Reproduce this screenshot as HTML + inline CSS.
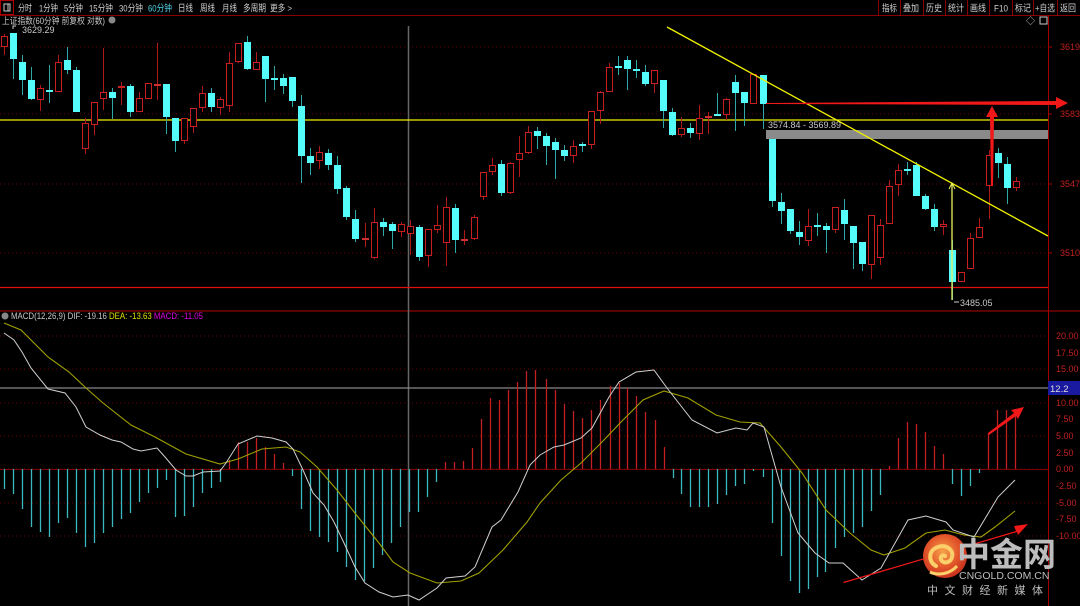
<!DOCTYPE html>
<html><head><meta charset="utf-8">
<style>
html,body{margin:0;padding:0;background:#000;width:1080px;height:606px;overflow:hidden}
svg{display:block}
text{font-family:"Liberation Sans","Noto Sans CJK SC",sans-serif}
</style></head>
<body>
<svg id="s" width="1080" height="606" viewBox="0 0 1080 606" xmlns="http://www.w3.org/2000/svg">
<defs>
<radialGradient id="lg" cx="0.45" cy="0.4" r="0.6">
<stop offset="0" stop-color="#f7a24a"/><stop offset="0.6" stop-color="#e2552a"/><stop offset="1" stop-color="#c8321e"/>
</radialGradient>
</defs>
<rect width="1080" height="606" fill="#000"/>
<line x1="0" y1="15.5" x2="1080" y2="15.5" stroke="#8a0000"/>
<rect x="0.5" y="0.5" width="13" height="14" fill="none" stroke="#a00"/>
<rect x="4" y="4" width="6" height="7" fill="none" stroke="#ccc"/>
<line x1="8" y1="4" x2="8" y2="11" stroke="#ccc"/>
<g font-size="9.5" fill="#d0d0d0" lengthAdjust="spacingAndGlyphs">
<text x="18" y="11.5" textLength="14" lengthAdjust="spacingAndGlyphs">分时</text>
<text x="39" y="11.5" textLength="19" lengthAdjust="spacingAndGlyphs">1分钟</text>
<text x="64" y="11.5" textLength="19" lengthAdjust="spacingAndGlyphs">5分钟</text>
<text x="89" y="11.5" textLength="24" lengthAdjust="spacingAndGlyphs">15分钟</text>
<text x="119" y="11.5" textLength="24" lengthAdjust="spacingAndGlyphs">30分钟</text>
<text x="148" y="11.5" textLength="24" lengthAdjust="spacingAndGlyphs" fill="#4fd8e8">60分钟</text>
<text x="178" y="11.5" textLength="15" lengthAdjust="spacingAndGlyphs">日线</text>
<text x="200" y="11.5" textLength="15" lengthAdjust="spacingAndGlyphs">周线</text>
<text x="222" y="11.5" textLength="15" lengthAdjust="spacingAndGlyphs">月线</text>
<text x="243" y="11.5" textLength="23" lengthAdjust="spacingAndGlyphs">多周期</text>
<text x="270" y="11.5" textLength="22" lengthAdjust="spacingAndGlyphs">更多 &gt;</text>
<text x="882" y="11.5" textLength="15" lengthAdjust="spacingAndGlyphs">指标</text>
<text x="903" y="11.5" textLength="16" lengthAdjust="spacingAndGlyphs">叠加</text>
<text x="926" y="11.5" textLength="16" lengthAdjust="spacingAndGlyphs">历史</text>
<text x="948" y="11.5" textLength="16" lengthAdjust="spacingAndGlyphs">统计</text>
<text x="970" y="11.5" textLength="16" lengthAdjust="spacingAndGlyphs">画线</text>
<text x="994" y="11.5" textLength="14" lengthAdjust="spacingAndGlyphs">F10</text>
<text x="1015" y="11.5" textLength="16" lengthAdjust="spacingAndGlyphs">标记</text>
<text x="1035" y="11.5" textLength="20" lengthAdjust="spacingAndGlyphs">+自选</text>
<text x="1060" y="11.5" textLength="16" lengthAdjust="spacingAndGlyphs">返回</text>
</g>
<g stroke="#8a0000">
<line x1="878.5" y1="0" x2="878.5" y2="15"/><line x1="900.5" y1="0" x2="900.5" y2="15"/><line x1="923.5" y1="0" x2="923.5" y2="15"/><line x1="945.5" y1="0" x2="945.5" y2="15"/><line x1="967.5" y1="0" x2="967.5" y2="15"/><line x1="989.5" y1="0" x2="989.5" y2="15"/><line x1="1012.5" y1="0" x2="1012.5" y2="15"/><line x1="1033.5" y1="0" x2="1033.5" y2="15"/><line x1="1057.5" y1="0" x2="1057.5" y2="15"/>
</g>
<text x="2" y="24" font-size="9" fill="#c8c8c8" textLength="103" lengthAdjust="spacingAndGlyphs">上证指数(60分钟 前复权 对数)</text>
<circle cx="112" cy="20" r="3.5" fill="#888"/>
<text x="22" y="33" font-size="9" fill="#c8c8c8">3629.29</text>
<path d="M13 29 v-3 h3" stroke="#ccc" fill="none"/>
<text x="1026" y="24" font-size="9" fill="#ccc">◇</text>
<rect x="1040" y="17" width="7" height="7" fill="none" stroke="#ccc"/>
<g stroke="#6a0000" stroke-dasharray="1,3">
<line x1="0" y1="47" x2="1048" y2="47"/><line x1="0" y1="114" x2="1048" y2="114"/><line x1="0" y1="184" x2="1048" y2="184"/><line x1="0" y1="253" x2="1048" y2="253"/>
<line x1="0" y1="336" x2="1048" y2="336"/><line x1="0" y1="369" x2="1048" y2="369"/><line x1="0" y1="403" x2="1048" y2="403"/><line x1="0" y1="436" x2="1048" y2="436"/><line x1="0" y1="469" x2="1048" y2="469"/><line x1="0" y1="503" x2="1048" y2="503"/><line x1="0" y1="536" x2="1048" y2="536"/>
</g>
<line x1="0" y1="469.5" x2="1048" y2="469.5" stroke="#7a0000"/>
<line x1="0" y1="311" x2="1080" y2="311" stroke="#5a0000" stroke-width="2"/>
<line x1="1048.5" y1="16" x2="1048.5" y2="606" stroke="#a00000"/>
<g font-size="9" fill="#c02020">
<text x="1060" y="50">3619</text><text x="1060" y="117">3583</text><text x="1060" y="187">3547</text><text x="1060" y="256">3510</text>
<text x="1056" y="339">20.00</text><text x="1056" y="356">17.50</text><text x="1056" y="372">15.00</text><text x="1056" y="406">10.00</text><text x="1056" y="422">7.50</text><text x="1056" y="439">5.00</text><text x="1056" y="456">2.50</text><text x="1056" y="472">0.00</text><text x="1056" y="489">-2.50</text><text x="1056" y="506">-5.00</text><text x="1056" y="522">-7.50</text><text x="1056" y="539">-10.00</text>
</g>
<g stroke="#a00000"><line x1="1048" y1="47" x2="1052" y2="47"/><line x1="1048" y1="114" x2="1052" y2="114"/><line x1="1048" y1="184" x2="1052" y2="184"/><line x1="1048" y1="253" x2="1052" y2="253"/></g>
<line x1="408.5" y1="26" x2="408.5" y2="606" stroke="#666" stroke-width="1.5"/>
<line x1="0" y1="388" x2="1048" y2="388" stroke="#888" stroke-width="1.2"/>
<rect x="1048" y="381" width="32" height="14" fill="#1a1aa0"/>
<text x="1050" y="392" font-size="9.5" fill="#ddd">12.2</text>
<line x1="0" y1="287.5" x2="1048" y2="287.5" stroke="#e01010" stroke-width="1.2"/>
<line x1="0" y1="120" x2="1048" y2="120" stroke="#f0f000" stroke-width="1.3"/>
<rect x="766" y="130" width="282" height="9" fill="#8a8a8a"/>
<text x="768" y="128" font-size="9" fill="#c8c8c8">3574.84 - 3569.89</text>
<g id="candles"></g>
<g id="bars"></g>
<line x1="667" y1="27" x2="1048" y2="236" stroke="#f0f000" stroke-width="1.3"/>
<line x1="952" y1="184" x2="952" y2="300" stroke="#e8f060" stroke-width="1.3"/>
<path d="M949 189 L952 183 L955 189" fill="none" stroke="#e8f060"/>
<text x="960" y="306" font-size="9" fill="#c8c8c8">3485.05</text>
<path d="M959 302 h-5" stroke="#ccc"/>
<path d="M766 103 L1056 101 L1056 97 L1068 103 L1056 109 L1056 105 L766 104 Z" fill="#f01818"/>
<path d="M991 186 L990 117 L986 117 L992 106 L998 117 L994 117 L993 186 Z" fill="#f01818"/>
<circle cx="5" cy="316" r="3.5" fill="#888"/>
<text x="11" y="319" font-size="9" fill="#c8c8c8" textLength="192" lengthAdjust="spacingAndGlyphs">MACD(12,26,9) DIF: -19.16 <tspan fill="#e0e000">DEA: -13.63</tspan> <tspan fill="#e000e0">MACD: -11.05</tspan></text>
<polyline fill="none" stroke="#a0a000" stroke-width="1.1" points="4,323 21,330 48,357 69,372 86,388 103,403 131,425 155,437 186,454 220,464 238,459 262,449 286,447 300,452 317,467 337,490 358,517 379,543 393,562 410,573 437,583 461,581 479,573 503,550 527,522 540,503 561,480 581,463 602,442 623,420 643,400 664,391 688,398 716,415 740,422 760,423 781,447 802,473 826,510 850,533 871,550 884,555 905,548 926,533 945,530 964,535 981,537 995,527 1015,511"/>
<polyline fill="none" stroke="#d0d0d0" stroke-width="1" points="4,333 14,340 22,352 31,368 48,389 65,393 76,407 86,427 100,435 112,440 121,442 133,449 141,451 157,448 165,457 176,470 186,476 193,476 203,472 220,471 226,463 238,444 257,436 272,438 286,442 293,449 303,470 313,493 324,505 334,522 344,543 355,567 365,583 379,592 393,597 408,595 419,600 437,588 446,578 465,576 475,567 492,527 501,520 518,492 530,465 540,455 554,447 564,445 581,438 592,428 609,397 619,382 636,372 654,370 667,388 692,420 717,433 736,428 747,430 753,423 764,427 781,487 798,533 815,553 829,563 843,563 862,580 881,568 908,520 926,516 946,522 953,530 974,537 998,497 1015,480"/>
<path d="M843 582 L1016 531 L1014 526 L1028 524 L1018 535 L1017 532 L844 583 Z" fill="#f01818"/>
<path d="M988 433 L1014 413 L1011 410 L1024 407 L1018 419 L1016 416 L989 435 Z" fill="#f01818"/>
<circle cx="945" cy="556" r="22" fill="url(#lg)"/>
<path d="M936 566 c-8 -4 -8 -16 2 -19 c8 -3 16 3 14 10 c-1 5 -7 7 -10 4 c-3 -3 0 -7 3 -5" fill="none" stroke="#fbd06a" stroke-width="4" stroke-linecap="round"/>
<path d="M930 572 c8 4 20 2 27 -6" fill="none" stroke="#fbd06a" stroke-width="3"/>
<text x="957" y="566" font-size="33" font-weight="bold" fill="#bdbdbd" style="font-family:'Noto Sans CJK SC',sans-serif">中金网</text>
<text x="959" y="579" font-size="10.5" fill="#bdbdbd">CNGOLD.COM.CN</text>
<text x="927" y="594" font-size="11" fill="#bdbdbd" letter-spacing="6.5">中文财经新媒体</text>
</svg>
<script>
var NS="http://www.w3.org/2000/svg";
function el(p,t,a){var e=document.createElementNS(NS,t);for(var k in a)e.setAttribute(k,a[k]);p.appendChild(e);return e;}
var C=[[4,36,47,34,55,'r'],[13,33,59,33,79,'c'],[22,62,80,55,95,'c'],[31,80,99,67,100,'c'],[40,88,100,85,111,'r'],[49,91,91,65,103,'c'],[58,62,92,55,92,'r'],[67,60,70,47,74,'c'],[76,70,112,67,112,'c'],[85,123,149,118,154,'r'],[94,102,125,102,135,'r'],[103,92,99,48,110,'r'],[112,92,98,88,119,'c'],[121,86,88,82,105,'r'],[130,86,112,84,117,'c'],[139,98,112,92,112,'r'],[148,83,99,83,99,'r'],[157,85,85,43,100,'r'],[166,84,117,84,134,'c'],[175,118,141,118,152,'c'],[184,118,141,118,144,'r'],[193,108,127,108,133,'r'],[202,93,108,86,112,'r'],[211,93,107,88,112,'c'],[220,99,108,97,115,'r'],[229,63,106,52,112,'r'],[238,43,62,43,63,'r'],[247,42,69,36,70,'c'],[256,62,70,52,70,'r'],[265,56,79,56,102,'c'],[274,79,79,66,90,'c'],[283,78,86,74,94,'c'],[292,77,101,77,107,'c'],[301,106,156,95,183,'c'],[310,156,163,148,175,'c'],[319,152,161,146,169,'r'],[328,153,165,149,170,'c'],[337,165,189,156,194,'c'],[346,188,217,186,220,'c'],[355,219,239,210,242,'c'],
[365,239,239,223,247,'r'],[374,222,258,208,259,'r'],[383,222,227,218,236,'c'],[392,224,231,222,249,'c'],[401,224,232,222,237,'r'],[410,226,234,220,255,'r'],[419,227,257,225,261,'c'],[428,229,256,229,267,'r'],[437,225,230,205,233,'r'],[446,207,243,197,266,'r'],[455,208,240,204,253,'c'],[464,240,240,230,245,'r'],[474,217,239,215,240,'r'],[483,172,197,172,200,'r'],[492,165,172,158,175,'r'],[501,164,193,160,196,'c'],[510,163,193,162,194,'r'],[519,153,160,136,177,'r'],[528,132,153,126,154,'r'],[537,131,136,127,149,'c'],[546,136,146,133,165,'c'],[555,142,150,138,179,'c'],[564,150,156,145,161,'c'],[573,146,156,140,163,'r'],[582,145,145,142,152,'c'],[591,111,145,111,149,'r'],[600,92,111,91,124,'r'],[609,67,92,63,92,'r'],[618,66,68,56,75,'c'],[627,60,69,56,90,'c'],[636,70,71,60,78,'c'],[645,72,84,65,86,'c'],[654,70,84,70,93,'r'],[663,80,111,80,128,'c'],[672,112,135,108,136,'c'],[681,128,135,117,137,'r'],[690,128,133,123,138,'c'],[699,118,134,105,140,'r'],[708,117,118,112,134,'r'],[717,115,115,93,116,'c'],
[726,99,115,98,120,'r'],[735,82,93,75,131,'c'],[744,92,103,92,126,'c'],[753,74,104,74,104,'r'],[763,75,104,75,129,'c'],[772,139,201,139,207,'c'],[781,202,211,193,224,'c'],[790,209,231,209,234,'c'],[799,232,237,221,245,'c'],[808,226,241,209,246,'r'],[817,226,226,213,236,'c'],[826,226,230,223,253,'c'],[835,207,230,207,233,'r'],[844,210,224,199,240,'c'],[853,226,243,226,269,'c'],[862,242,264,242,271,'c'],[871,215,265,215,279,'r'],[880,225,258,219,265,'r'],[889,186,224,180,224,'r'],[898,170,185,164,196,'r'],[907,170,170,162,175,'c'],[916,165,196,162,196,'c'],[925,196,209,194,210,'c'],[934,209,227,204,231,'c'],[943,224,227,220,235,'r'],[952,250,282,240,300,'c'],[961,272,282,272,282,'r'],[970,238,269,233,269,'r'],[979,227,238,218,238,'r'],[989,155,186,150,219,'r'],[998,153,163,148,178,'c'],[1007,164,188,157,204,'c'],[1016,181,188,177,191,'r']];
var g=document.getElementById('candles');
C.forEach(function(d){var x=d[0],cy=d[5]=='c',col=cy?'#54fcfc':'#c82020',wc=cy?'#2fa8a8':'#b01818';
el(g,'line',{x1:x+.5,y1:d[3],x2:x+.5,y2:d[4],stroke:wc});
var h=d[2]-d[1];
if(h<2){el(g,'rect',{x:x-3,y:d[1]-1,width:7,height:2,fill:cy?'#54fcfc':'#d03030'});}
else if(cy)el(g,'rect',{x:x-3,y:d[1],width:7,height:h,fill:col});
else el(g,'rect',{x:x-2.5,y:d[1]+.5,width:6,height:h-1,fill:'#000',stroke:col});});
var B=[[4,489],[13,494],[22,509],[31,527],[40,532],[49,537],[58,523],[67,518],[76,533],[85,547],[94,543],[103,533],[112,527],[121,519],[130,513],[139,502],[148,493],[157,488],[166,480],[175,517],[184,516],[193,507],[202,493],[211,488],[220,482],[229,460],[238,442],[247,442],[256,438],[265,447],[274,454],[283,463],[292,476],[301,509],[310,531],[319,537],[328,542],[337,552],[346,567],[355,580],[364,581],[373,568],[382,555],[391,543],[400,527],[409,512],[418,512],[427,497],[436,482],[445,462],[454,462],[463,461],[472,448],[481,419],[490,398],[499,400],[508,390],[517,382],[526,371],[535,370],[546,379],[555,390],[564,404],[573,411],[582,418],[591,410],[600,400],[610,386],[619,383],[627,388],[636,396],[645,412],[655,420],[664,447],[673,478],[681,494],[690,507],[699,507],[708,507],[717,504],[726,495],[735,486],[744,484],[753,471],[763,477],[772,523],[781,556],[790,581],[799,593],[808,589],[817,577],[825,572],[835,548],[844,537],[853,533],[862,527],[871,511],[880,495],[889,466],[898,438],[907,422],[916,424],[925,432],[934,446],[943,454],[952,484],[961,496],[970,486],[979,473],[988,433],[997,410],[1006,410],[1015,413]];
var gb=document.getElementById('bars');
B.forEach(function(b){var up=b[1]<469;el(gb,'line',{x1:b[0]+.5,y1:469,x2:b[0]+.5,y2:b[1],stroke:up?'#c02020':'#3cb8c0','stroke-width':1.3});});
</script>
</body></html>
